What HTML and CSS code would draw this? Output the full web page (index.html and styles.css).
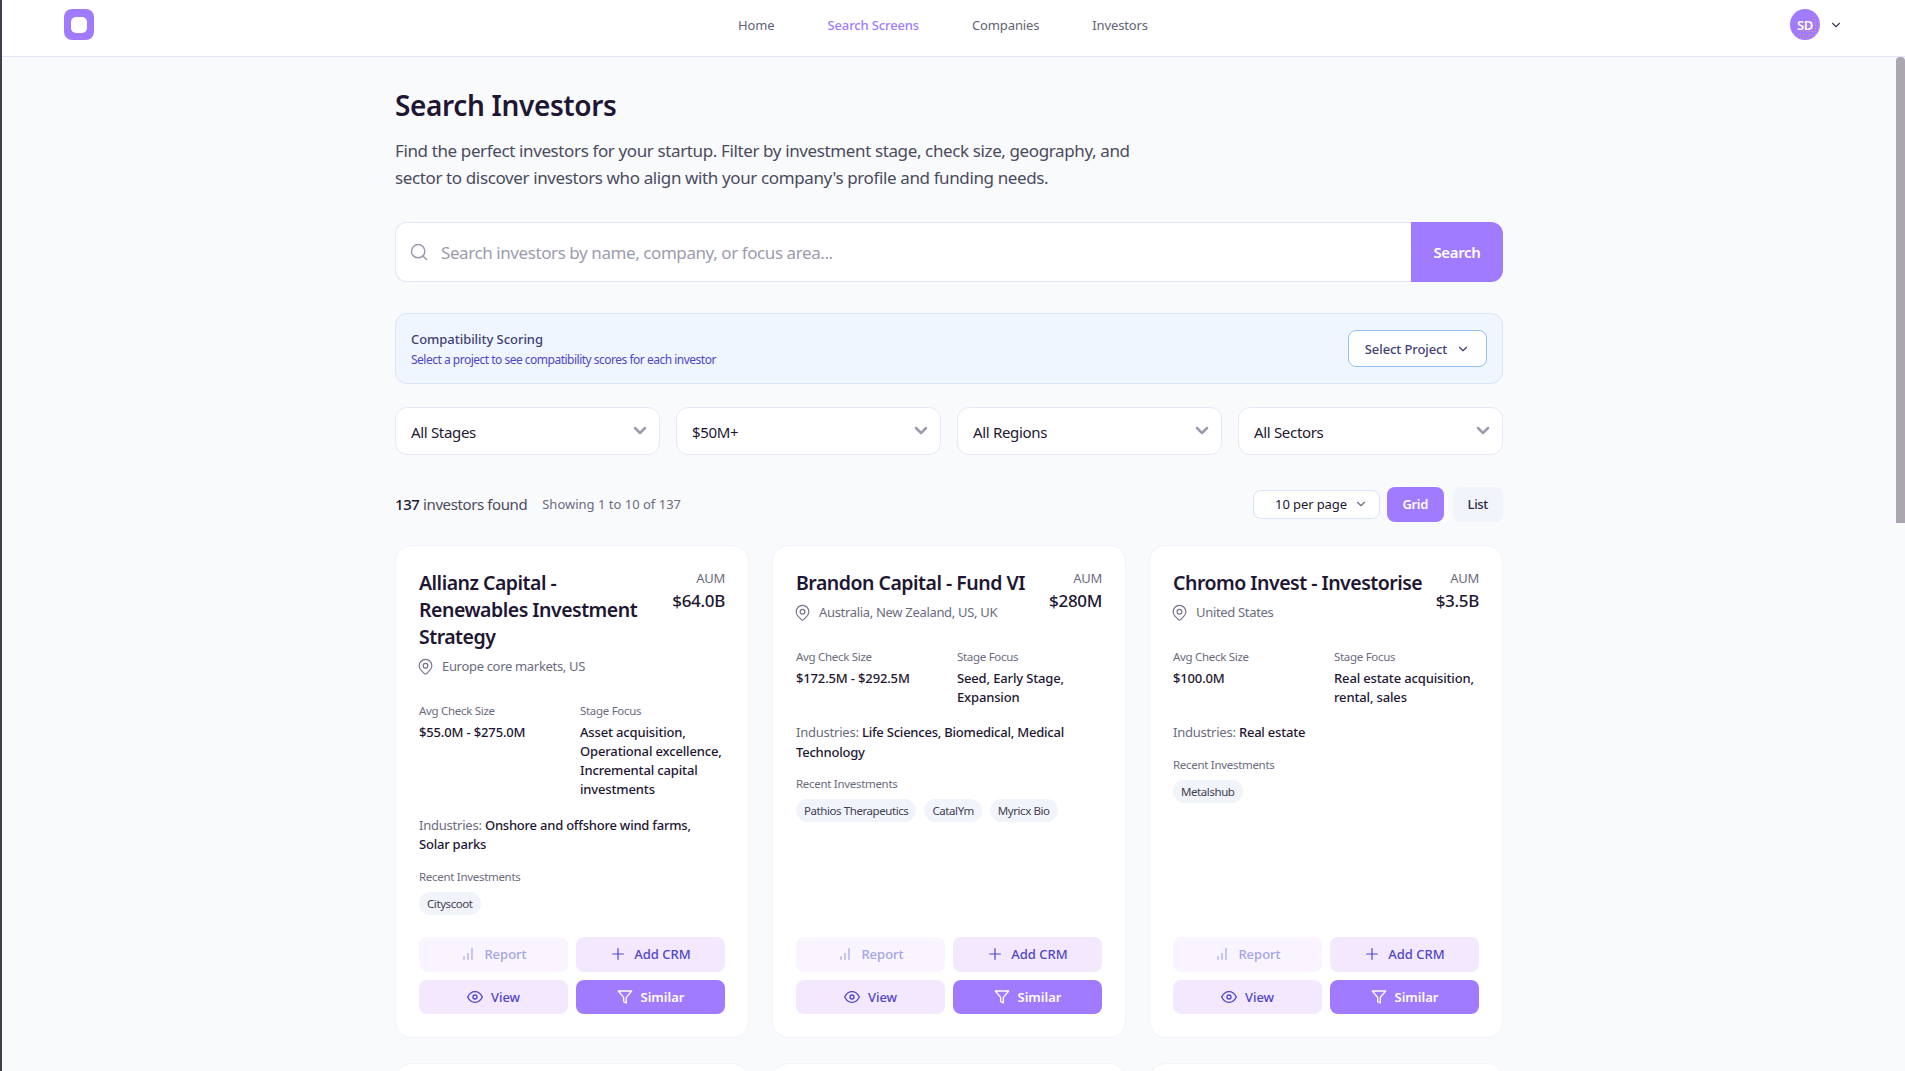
FILE: index.html
```html
<!DOCTYPE html>
<html lang="en">
<head>
<meta charset="utf-8">
<title>Search Investors</title>
<link rel="stylesheet" href="styles.css">
</head>
<body>
<div class="edge"></div>
<div class="app">
  <header class="topbar">
    <div class="logo"><span class="logo-inner"></span></div>
    <nav class="nav">
      <a class="nav-link">Home</a>
      <a class="nav-link active">Search Screens</a>
      <a class="nav-link">Companies</a>
      <a class="nav-link">Investors</a>
    </nav>
    <div class="user">
      <div class="avatar"><span class="avatar-text">SD</span></div>
      <svg class="chev-user" viewBox="0 0 24 24"><path d="M6 9l6 6 6-6"/></svg>
    </div>
  </header>
  <div class="viewport">
    <main class="content">
      <div class="container">
        <h1 class="title">Search Investors</h1>
        <p class="intro">Find the perfect investors for your startup. Filter by investment stage, check size, geography, and sector to discover investors who align with your company's profile and funding needs.</p>

        <div class="searchbar">
          <div class="search-field">
            <svg class="search-icon" viewBox="0 0 24 24"><circle cx="11" cy="11" r="8"/><path d="M21 21l-4.3-4.3"/></svg>
            <input class="search-input" type="text" placeholder="Search investors by name, company, or focus area...">
          </div>
          <button class="search-btn">Search</button>
        </div>

        <section class="compat">
          <div class="compat-text">
            <div class="compat-title">Compatibility Scoring</div>
            <div class="compat-sub">Select a project to see compatibility scores for each investor</div>
          </div>
          <button class="project-btn">Select Project
            <svg class="chev-sm" viewBox="0 0 24 24"><path d="M6 9l6 6 6-6"/></svg>
          </button>
        </section>

        <div class="filters">
          <div class="filter">All Stages<svg class="chev-filter" viewBox="0 0 20 20"><path d="M5 7l5 5 5-5"/></svg></div>
          <div class="filter">$50M+<svg class="chev-filter" viewBox="0 0 20 20"><path d="M5 7l5 5 5-5"/></svg></div>
          <div class="filter">All Regions<svg class="chev-filter" viewBox="0 0 20 20"><path d="M5 7l5 5 5-5"/></svg></div>
          <div class="filter">All Sectors<svg class="chev-filter" viewBox="0 0 20 20"><path d="M5 7l5 5 5-5"/></svg></div>
        </div>

        <div class="results">
          <div class="count"><b>137</b> investors found</div>
          <div class="showing">Showing 1 to 10 of 137</div>
          <div class="results-tools">
            <div class="perpage">10 per page<svg class="chev-sm gray" viewBox="0 0 24 24"><path d="M6 9l6 6 6-6"/></svg></div>
            <button class="view-btn on">Grid</button>
            <button class="view-btn">List</button>
          </div>
        </div>

        <div class="grid">
          <article class="card">
            <div class="card-head">
              <div class="card-id">
                <h2 class="card-title">Allianz Capital - Renewables Investment Strategy</h2>
                <div class="loc"><svg class="pin" viewBox="0 0 24 24"><path d="M17.657 16.657L13.414 20.9a2 2 0 01-2.827 0l-4.244-4.243a8 8 0 1111.314 0z"/><path d="M15 11a3 3 0 11-6 0 3 3 0 016 0z"/></svg>Europe core markets, US</div>
              </div>
              <div class="aum"><div class="aum-label">AUM</div><div class="aum-value">$64.0B</div></div>
            </div>
            <div class="facts">
              <div><div class="label">Avg Check Size</div><div class="value">$55.0M - $275.0M</div></div>
              <div><div class="label">Stage Focus</div><div class="value">Asset acquisition, Operational excellence, Incremental capital investments</div></div>
            </div>
            <div class="industries"><span class="muted">Industries:</span> Onshore and offshore wind farms, Solar parks</div>
            <div class="label recent">Recent Investments</div>
            <div class="tags"><span class="tag">Cityscoot</span></div>
            <div class="actions">
              <button class="act act-report"><svg class="ic" viewBox="0 0 24 24"><path d="M18 20V4M12 20v-9M6 20v-4"/></svg>Report</button>
              <button class="act act-soft"><svg class="ic" viewBox="0 0 24 24"><path d="M12 4v16M4 12h16"/></svg>Add CRM</button>
              <button class="act act-soft"><svg class="ic ic-eye" viewBox="0 0 24 24"><path d="M1 12s4-8 11-8 11 8 11 8-4 8-11 8-11-8-11-8z"/><circle cx="12" cy="12" r="3"/></svg>View</button>
              <button class="act act-solid"><svg class="ic ic-eye" viewBox="0 0 24 24"><path d="M22 3H2l8 9.46V19l4 2v-8.54L22 3z"/></svg>Similar</button>
            </div>
          </article>

          <article class="card">
            <div class="card-head">
              <div class="card-id">
                <h2 class="card-title">Brandon Capital - Fund VI</h2>
                <div class="loc"><svg class="pin" viewBox="0 0 24 24"><path d="M17.657 16.657L13.414 20.9a2 2 0 01-2.827 0l-4.244-4.243a8 8 0 1111.314 0z"/><path d="M15 11a3 3 0 11-6 0 3 3 0 016 0z"/></svg>Australia, New Zealand, US, UK</div>
              </div>
              <div class="aum"><div class="aum-label">AUM</div><div class="aum-value">$280M</div></div>
            </div>
            <div class="facts">
              <div><div class="label">Avg Check Size</div><div class="value">$172.5M - $292.5M</div></div>
              <div><div class="label">Stage Focus</div><div class="value">Seed, Early Stage, Expansion</div></div>
            </div>
            <div class="industries"><span class="muted">Industries:</span> Life Sciences, Biomedical, Medical Technology</div>
            <div class="label recent">Recent Investments</div>
            <div class="tags"><span class="tag">Pathios Therapeutics</span><span class="tag">CatalYm</span><span class="tag">Myricx Bio</span></div>
            <div class="actions">
              <button class="act act-report"><svg class="ic" viewBox="0 0 24 24"><path d="M18 20V4M12 20v-9M6 20v-4"/></svg>Report</button>
              <button class="act act-soft"><svg class="ic" viewBox="0 0 24 24"><path d="M12 4v16M4 12h16"/></svg>Add CRM</button>
              <button class="act act-soft"><svg class="ic ic-eye" viewBox="0 0 24 24"><path d="M1 12s4-8 11-8 11 8 11 8-4 8-11 8-11-8-11-8z"/><circle cx="12" cy="12" r="3"/></svg>View</button>
              <button class="act act-solid"><svg class="ic ic-eye" viewBox="0 0 24 24"><path d="M22 3H2l8 9.46V19l4 2v-8.54L22 3z"/></svg>Similar</button>
            </div>
          </article>

          <article class="card">
            <div class="card-head">
              <div class="card-id">
                <h2 class="card-title">Chromo Invest - Investorise</h2>
                <div class="loc"><svg class="pin" viewBox="0 0 24 24"><path d="M17.657 16.657L13.414 20.9a2 2 0 01-2.827 0l-4.244-4.243a8 8 0 1111.314 0z"/><path d="M15 11a3 3 0 11-6 0 3 3 0 016 0z"/></svg>United States</div>
              </div>
              <div class="aum"><div class="aum-label">AUM</div><div class="aum-value">$3.5B</div></div>
            </div>
            <div class="facts">
              <div><div class="label">Avg Check Size</div><div class="value">$100.0M</div></div>
              <div><div class="label">Stage Focus</div><div class="value">Real estate acquisition, rental, sales</div></div>
            </div>
            <div class="industries"><span class="muted">Industries:</span> Real estate</div>
            <div class="label recent">Recent Investments</div>
            <div class="tags"><span class="tag">Metalshub</span></div>
            <div class="actions">
              <button class="act act-report"><svg class="ic" viewBox="0 0 24 24"><path d="M18 20V4M12 20v-9M6 20v-4"/></svg>Report</button>
              <button class="act act-soft"><svg class="ic" viewBox="0 0 24 24"><path d="M12 4v16M4 12h16"/></svg>Add CRM</button>
              <button class="act act-soft"><svg class="ic ic-eye" viewBox="0 0 24 24"><path d="M1 12s4-8 11-8 11 8 11 8-4 8-11 8-11-8-11-8z"/><circle cx="12" cy="12" r="3"/></svg>View</button>
              <button class="act act-solid"><svg class="ic ic-eye" viewBox="0 0 24 24"><path d="M22 3H2l8 9.46V19l4 2v-8.54L22 3z"/></svg>Similar</button>
            </div>
          </article>

          <div class="card card-next"></div>
          <div class="card card-next"></div>
          <div class="card card-next"></div>
        </div>
      </div>
    </main>
    <div class="scrolltrack"><div class="scrollthumb"></div></div>
  </div>
</div>
</body>
</html>
```
FILE: styles.css
```css
* { box-sizing: border-box; }
html, body { height: 100%; }
body {
  margin: 0;
  display: flex;
  height: 100vh;
  overflow: hidden;
  background: #f9fafc;
  color: #1e1633;
  font-family: "Noto Sans", "Open Sans", "Liberation Sans", sans-serif;
  letter-spacing: -0.02em;
}
button { font-family: inherit; letter-spacing: inherit; border: 0; cursor: pointer; }
svg { fill: none; stroke: currentColor; stroke-linecap: round; stroke-linejoin: round; flex: none; }

.edge { width: 2px; background: #3f3e4b; flex: none; }
.app { flex: 1; min-width: 0; display: flex; flex-direction: column; }

.topbar {
  height: 57px;
  flex: none;
  display: flex;
  align-items: flex-start;
  background: #fff;
  border-bottom: 1px solid #e3e4f5;
  padding: 9px 62px 0 62px;
}
.logo {
  width: 30px; height: 31px;
  border-radius: 8px;
  background: #a17bff;
  display: flex; align-items: center; justify-content: center;
}
.logo-inner { width: 16px; height: 16px; background: #fff; border-radius: 5px; }
.nav { display: flex; gap: 53px; margin-left: 644px; height: 31px; align-items: center; }
.nav-link { font-size: 13px; color: #5f6478; letter-spacing: -0.01em; }
.nav-link.active { color: #a17bff; font-weight: 500; }
.user { margin-left: auto; display: flex; align-items: center; gap: 8px; height: 31px; }
.avatar {
  width: 30px; height: 31px; border-radius: 50%;
  background: #a17bff;
  color: #fff; font-size: 13px; font-weight: 600;
  display: flex; align-items: center; justify-content: center;
  position: relative; overflow: hidden;
}
.avatar::before {
  content: "";
  position: absolute; inset: 0;
  background-image: radial-gradient(circle, #ef9f58 0 0.9px, transparent 1px);
  background-size: 3px 3px;
  -webkit-mask-image: linear-gradient(135deg, transparent 38%, #000 72%);
  mask-image: linear-gradient(135deg, transparent 38%, #000 72%);
}
.avatar-text { position: relative; }
.chev-user { width: 14px; height: 14px; stroke-width: 2; color: #3f3e56; margin-left: 1px; }

.viewport { flex: 1; min-height: 0; display: flex; }
.content { flex: 1; min-width: 0; overflow: hidden; }
.scrolltrack { width: 9px; flex: none; background: #f9fafc; }
.scrollthumb { height: 466px; background: #aba6b0; border-radius: 4px 4px 0 0; }

.container { width: 1108px; margin: 0 auto; padding-top: 28px; }
.title { margin: 0; font-size: 28px; line-height: 40px; font-weight: 600; letter-spacing: -0.36px; color: #1e1633; }
.intro { margin: 12px 0 0; width: 745px; font-size: 17px; line-height: 27px; letter-spacing: -0.38px; color: #4b4b5e; }

.searchbar { margin-top: 31px; height: 60px; display: flex; }
.search-field {
  flex: 1; display: flex; align-items: center; gap: 10px;
  background: #fff; padding-left: 13px;
  border: 1px solid #e3e4f5; border-right: 0;
  border-radius: 12px 0 0 12px;
}
.search-icon { width: 20px; height: 20px; stroke-width: 1.8; color: #9a9bae; }
.search-input {
  flex: 1; border: 0; outline: 0; background: transparent;
  font: inherit; font-size: 17px; letter-spacing: -0.42px; color: #1e1633;
}
.search-input::placeholder { color: #9c9cae; opacity: 1; }
.search-btn {
  width: 92px; background: #a17bff; color: #fff;
  font-size: 15px; font-weight: 600;
  border-radius: 0 12px 12px 0;
}

.compat {
  margin-top: 31px; height: 71px;
  display: flex; align-items: center; justify-content: space-between;
  padding: 0 15px;
  background: #eff6ff;
  border: 1px solid #d9e5f8;
  border-radius: 12px;
}
.compat-text { padding-top: 2px; }
.compat-title { font-size: 13px; font-weight: 500; color: #3f3f73; line-height: 20px; letter-spacing: -0.05px; }
.compat-sub { font-size: 12px; color: #4f46c8; line-height: 20px; margin-top: 1px; letter-spacing: -0.5px; }
.project-btn {
  width: 139px; height: 37px;
  display: flex; align-items: center; justify-content: center; gap: 9px;
  background: #fff; border: 1px solid #93c0f8; border-radius: 8px;
  font-size: 13px; font-weight: 500; color: #3f3f73; letter-spacing: -0.1px;
}
.chev-sm { width: 14px; height: 14px; stroke-width: 2; color: #3f3f73; }
.chev-sm.gray { color: #6b6b80; }

.filters { margin-top: 23px; display: grid; grid-template-columns: repeat(4, 1fr); gap: 16px; }
.filter {
  height: 48px; display: flex; align-items: center; justify-content: space-between;
  background: #fff; border: 1px solid #e7e8f7; border-radius: 12px;
  padding: 1px 9px 0 15px; font-size: 15px; color: #1e1633;
}
.chev-filter { width: 20px; height: 20px; stroke-width: 2.5; color: #9a9bae; margin-top: -2px; }

.results { margin-top: 31px; height: 36px; display: flex; align-items: center; }
.count { font-size: 15px; color: #4b4b5e; letter-spacing: -0.4px; }
.count b { font-weight: 500; color: #1e1633; }
.showing { margin-left: 15px; font-size: 13px; color: #6b6b80; letter-spacing: 0; }
.results-tools { margin-left: auto; display: flex; align-items: center; gap: 8px; }
.perpage {
  width: 127px; height: 29px; display: flex; align-items: center; justify-content: flex-end; gap: 7px;
  padding-right: 11px; background: #fff; border: 1px solid #dde3f6; border-radius: 8px;
  font-size: 13px; color: #1e1633; letter-spacing: -0.1px; margin-right: -1px;
}
.view-btn { height: 35px; padding: 0 15px; border-radius: 8px; background: #f2f4fc; font-size: 13px; font-weight: 500; color: #2a2a40; }
.view-btn.on { background: #a17bff; color: #fff; font-weight: 600; padding: 0 15.5px; margin-right: 1px; }

.grid { margin-top: 23px; display: grid; grid-template-columns: repeat(3, 1fr); gap: 25px 23px; }
.card {
  min-height: 493px; display: flex; flex-direction: column;
  background: #fff; border: 1px solid #f2f4fc; border-radius: 16px;
  padding: 23px 23px 23px;
}
.card-next { min-height: 200px; }
.card-head { display: flex; justify-content: space-between; gap: 6px; }
.card-id { flex: 1; min-width: 0; }
.card-title { margin: 0; font-size: 19.5px; line-height: 27px; font-weight: 600; letter-spacing: -0.5px; color: #1e1633; }
.loc { display: flex; align-items: center; gap: 7px; margin-top: 6px; font-size: 13px; line-height: 20px; color: #6b6b80; }
.pin { width: 19px; height: 19px; stroke-width: 1.5; color: #74748c; margin-left: -3px; }
.aum { text-align: right; flex: none; }
.aum-label { font-size: 13px; line-height: 18px; color: #6b6b80; }
.aum-value { font-size: 17px; line-height: 26px; font-weight: 500; color: #1e1633; margin-top: 1px; }

.facts { display: grid; grid-template-columns: 1fr 1fr; gap: 16px; margin-top: 27px; }
.label { font-size: 11.5px; line-height: 16px; letter-spacing: -0.3px; color: #6b6b80; }
.value { font-size: 13px; line-height: 19.3px; font-weight: 500; letter-spacing: -0.15px; color: #1e1633; margin-top: 3.5px; }
.industries { margin-top: 16px; padding-right: 8px; font-size: 13px; line-height: 19.5px; font-weight: 500; letter-spacing: -0.22px; color: #1e1633; }
.muted { font-weight: 400; color: #6b6b80; }
.recent { margin-top: 14px; }
.tags { display: flex; flex-wrap: wrap; gap: 8px; margin-top: 7px; }
.tag { height: 23px; padding: 0 8px; display: flex; align-items: center; border-radius: 12px; background: #f2f4fc; font-size: 11.5px; letter-spacing: -0.42px; color: #3f3f52; }

.actions { margin-top: auto; display: grid; grid-template-columns: 1fr 1fr; gap: 8px; }
.act {
  height: 34.5px; display: flex; align-items: center; justify-content: center; gap: 8px;
  border-radius: 8px; font-size: 13px; font-weight: 500; letter-spacing: 0;
}
.act-report { background: #f9f4ff; color: #a4a4e8; }
.act-soft { background: #f4e8ff; color: #4f46c8; }
.act-solid { background: #a17bff; color: #fff; font-weight: 600; }
.ic { width: 16px; height: 16px; stroke-width: 1.8; }
.ic-eye { stroke-width: 2; }
```
